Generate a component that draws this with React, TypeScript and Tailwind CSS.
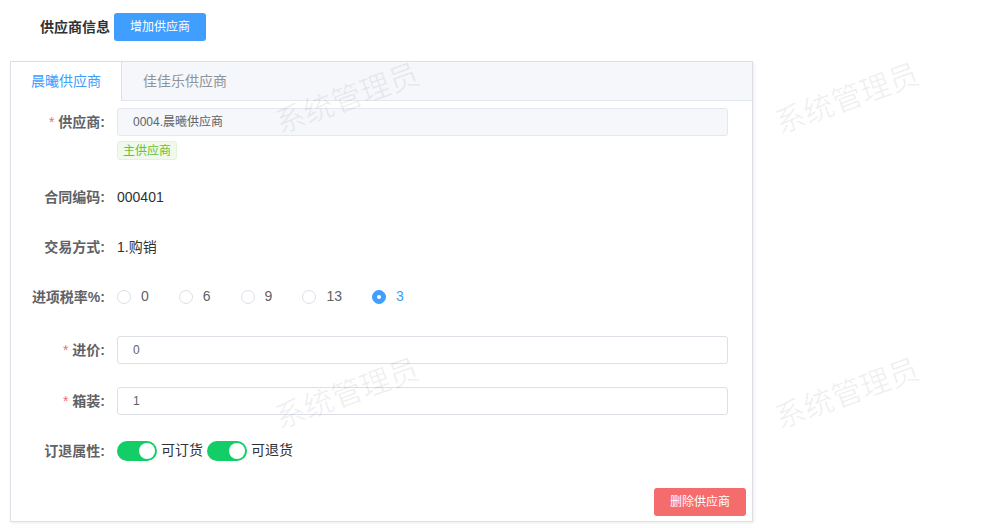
import React from 'react';

const FONT = { fontFamily: '"Liberation Sans", "Noto Sans CJK SC", sans-serif' };

const Label: React.FC<{ text: string; required?: boolean }> = ({ text, required }) => (
  <div className="w-[106px] shrink-0 pr-3 text-right h-7 leading-7 text-[14px] font-bold text-[#606266]">
    {required && <span className="text-[#f56c6c] mr-1 font-normal">*</span>}
    {text}
  </div>
);

const Radio: React.FC<{ label: string; checked?: boolean }> = ({ label, checked }) => (
  <div className="flex items-center mr-[30px]">
    {checked ? (
      <span className="w-[14px] h-[14px] rounded-full bg-[#409eff] border border-[#409eff] flex items-center justify-center">
        <span className="w-1 h-1 rounded-full bg-white"></span>
      </span>
    ) : (
      <span className="w-[14px] h-[14px] rounded-full bg-white border border-[#dcdfe6]"></span>
    )}
    <span className={`ml-[10px] text-[14px] ${checked ? 'text-[#409eff]' : 'text-[#606266]'}`}>{label}</span>
  </div>
);

const Switch: React.FC<{ label: string }> = ({ label }) => (
  <div className="flex items-center">
    <span className="w-10 h-5 rounded-full bg-[#13ce66] flex items-center justify-end pr-[2px]">
      <span className="w-4 h-4 rounded-full bg-white"></span>
    </span>
    <span className="ml-1 text-[14px] text-[#303133]">{label}</span>
  </div>
);

const Watermark: React.FC<{ className: string }> = ({ className }) => (
  <div
    className={`absolute pointer-events-none select-none text-[30px] text-black/[0.06] -rotate-[20deg] whitespace-nowrap ${className}`}
  >
    系统管理员
  </div>
);

export default function App() {
  return (
    <div className="relative w-[993px] h-[528px] overflow-hidden bg-white" style={FONT}>
      <div className="flex items-center pl-10 pt-[13px]">
        <span className="text-[14px] font-bold text-[#303133]">供应商信息</span>
        <button className="ml-1 h-7 w-[92px] rounded-[3px] bg-[#409eff] text-white text-xs">增加供应商</button>
      </div>

      <div className="ml-[10px] mt-5 w-[743px] border border-[#dcdfe6] shadow-[1px_1px_3px_rgba(0,0,0,0.08)]">
        <div className="flex h-[39px] bg-[#f5f7fa] border-b border-[#e4e7ed]">
          <div className="-mb-px h-[39px] bg-white border-r border-[#dcdfe6] px-5 flex items-center text-[14px] text-[#409eff]">
            晨曦供应商
          </div>
          <div className="px-[21px] flex items-center text-[14px] text-[#909399]">佳佳乐供应商</div>
        </div>

        <div className="pt-[7px] pr-[6px] pb-[5px]">
          <div className="flex mb-[21px]">
            <Label text="供应商:" required />
            <div className="flex-1 pr-[18px]">
              <div className="h-7 rounded-[3px] border border-[#e4e7ed] bg-[#f5f7fa] px-[15px] flex items-center text-xs text-[#606266]">
                0004.晨曦供应商
              </div>
              <span className="mt-[5px] inline-flex h-[19px] items-center rounded-[3px] border border-[#e1f3d8] bg-[#f0f9eb] px-[5px] text-xs text-[#67c23a]">
                主供应商
              </span>
            </div>
          </div>

          <div className="flex mb-[22px]">
            <Label text="合同编码:" />
            <div className="h-7 leading-7 text-[14px] text-[#303133]">000401</div>
          </div>

          <div className="flex mb-[22px]">
            <Label text="交易方式:" />
            <div className="h-7 leading-7 text-[14px] text-[#303133]">1.购销</div>
          </div>

          <div className="flex mb-[25px]">
            <Label text="进项税率%:" />
            <div className="h-7 flex items-center">
              <Radio label="0" />
              <Radio label="6" />
              <Radio label="9" />
              <Radio label="13" />
              <Radio label="3" checked />
            </div>
          </div>

          <div className="flex mb-[23px]">
            <Label text="进价:" required />
            <div className="flex-1 pr-[18px]">
              <div className="h-7 rounded-[3px] border border-[#dcdfe6] bg-white px-[15px] flex items-center text-xs text-[#606266]">
                0
              </div>
            </div>
          </div>

          <div className="flex mb-[22px]">
            <Label text="箱装:" required />
            <div className="flex-1 pr-[18px]">
              <div className="h-7 rounded-[3px] border border-[#dcdfe6] bg-white px-[15px] flex items-center text-xs text-[#606266]">
                1
              </div>
            </div>
          </div>

          <div className="flex">
            <Label text="订退属性:" />
            <div className="h-7 flex items-center gap-1">
              <Switch label="可订货" />
              <Switch label="可退货" />
            </div>
          </div>

          <div className="flex justify-end mt-[23px]">
            <button className="h-7 w-[92px] rounded-[3px] bg-[#f56c6c] text-white text-xs">删除供应商</button>
          </div>
        </div>
      </div>

      <Watermark className="left-[272px] top-[76px]" />
      <Watermark className="left-[772px] top-[76px]" />
      <Watermark className="left-[272px] top-[371px]" />
      <Watermark className="left-[772px] top-[371px]" />
    </div>
  );
}
